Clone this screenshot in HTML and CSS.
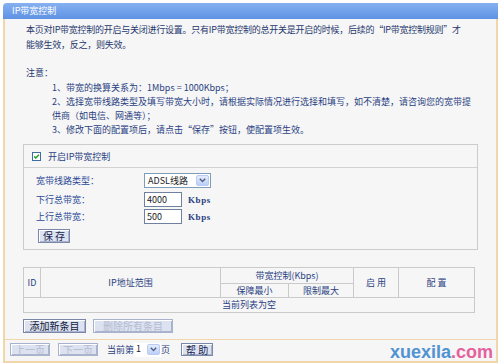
FILE: index.html
```html
<!DOCTYPE html>
<html lang="zh-CN">
<head>
<meta charset="utf-8">
<title>IP带宽控制</title>
<link rel="stylesheet" href="styles.css">
</head>
<body>
<div class="window">
  <div class="title">IP带宽控制</div>
  <div class="panel">
    <div class="content">
      <p class="intro">本页对IP带宽控制的开启与关闭进行设置。只有IP带宽控制的总开关是开启的时候，后续的“IP带宽控制规则”才<br>能够生效，反之，则失效。</p>
      <p class="note-title">注意：</p>
      <div class="notes">
        <p>1、带宽的换算关系为：1Mbps = 1000Kbps；</p>
        <p>2、选择宽带线路类型及填写带宽大小时，请根据实际情况进行选择和填写，如不清楚，请咨询您的宽带提<br>供商（如电信、网通等）；</p>
        <p>3、修改下面的配置项后，请点击“保存”按钮，使配置项生效。</p>
      </div>
      <div class="box">
        <div class="enable">
          <span class="check"><svg width="9" height="9" viewBox="0 0 9 9"><rect x="0.5" y="0.5" width="8" height="8" fill="#fff" stroke="#3a6ea5"/><path d="M2.2 4.4 L3.8 6 L6.9 2.7" fill="none" stroke="#21a121" stroke-width="1.5"/></svg></span>
          <span>开启IP带宽控制</span>
        </div>
        <div class="form">
          <div class="row r1">
            <span class="label">宽带线路类型：</span>
            <span class="select">ADSL线路<span class="arrow"><svg width="7" height="5" viewBox="0 0 7 5"><path d="M0.8 0.8 L3.5 3.6 L6.2 0.8" fill="none" stroke="#4d6185" stroke-width="1.4"/></svg></span></span>
          </div>
          <div class="row r2">
            <span class="label">下行总带宽：</span>
            <span class="field">4000</span><span class="unit">Kbps</span>
          </div>
          <div class="row r3">
            <span class="label">上行总带宽：</span>
            <span class="field">500</span><span class="unit">Kbps</span>
          </div>
          <div class="row r4">
            <button class="btn save">保 存</button>
          </div>
        </div>
      </div>
      <table class="rules">
        <colgroup>
          <col class="c-id"><col class="c-ip"><col class="c-min"><col class="c-max"><col class="c-en"><col class="c-cfg">
        </colgroup>
        <tr class="h1">
          <th rowspan="2">ID</th>
          <th rowspan="2">IP地址范围</th>
          <th colspan="2">带宽控制(Kbps)</th>
          <th rowspan="2">启 用</th>
          <th rowspan="2">配 置</th>
        </tr>
        <tr class="h2">
          <th>保障最小</th>
          <th>限制最大</th>
        </tr>
        <tr class="empty">
          <td colspan="6">当前列表为空</td>
        </tr>
      </table>
      <div class="actions">
        <button class="btn add">添加新条目</button>
        <button class="btn del" disabled>删除所有条目</button>
      </div>
    </div>
    <div class="footer">
      <button class="btn pager" disabled>上一页</button>
      <button class="btn pager" disabled>下一页</button>
      <span class="cur">当前第</span>
      <span class="page-select">1<span class="arrow"><svg width="7" height="5" viewBox="0 0 7 5"><path d="M0.8 0.8 L3.5 3.6 L6.2 0.8" fill="none" stroke="#4d6185" stroke-width="1.4"/></svg></span></span>
      <span class="pg">页</span>
      <button class="btn help">帮 助</button>
    </div>
  </div>
</div>
<div class="watermark">xuexila<span class="dot">.com</span></div>
</body>
</html>
```

FILE: styles.css
```css
* {
  box-sizing: border-box;
  margin: 0;
  padding: 0;
}

html, body {
  background: #ffffff;
}

body {
  position: relative;
  width: 500px;
  height: 363px;
  overflow: hidden;
  font-family: "Noto Sans CJK SC", "DejaVu Sans", sans-serif;
  font-size: 9px;
  color: #2a3f82;
}

.window {
  margin: 3px 0 0 3px;
  width: 495px;
}

.title {
  height: 16px;
  line-height: 16px;
  padding-left: 9px;
  color: #ffffff;
  font-size: 9px;
  background: linear-gradient(#86b0f1, #5f92e4);
  border-radius: 4px 0 0 0;
}

.panel {
  height: 344px;
  background: #f6f6f6;
  border: 2px solid #f0d6a8;
  border-top: none;
  display: flex;
  flex-direction: column;
}

.content {
  padding: 3px 18px 6px 18px;
}

.intro {
  line-height: 15px;
  padding-left: 3px;
  color: #26386e;
  white-space: nowrap;
  letter-spacing: -0.25px;
}

.note-title {
  margin-top: 13px;
  line-height: 15px;
  padding-left: 3px;
  color: #26386e;
}

.notes {
  margin-top: 1px;
  padding-left: 29px;
  line-height: 14px;
  color: #2a3f82;
  white-space: nowrap;
}

.box {
  margin-top: 7px;
  border: 1px solid #cccccc;
  background: #f6f6f6;
}

.enable {
  height: 23px;
  display: flex;
  align-items: center;
  padding-left: 8px;
  border-bottom: 1px solid #d2d2d2;
}

.check {
  display: flex;
  width: 9px;
  height: 9px;
  margin-right: 7px;
}

.form {
  padding: 5px 0 6px 12px;
}

.row {
  display: flex;
  align-items: center;
  height: 15px;
}

.r2 { margin-top: 4px; }
.r3 { margin-top: 2px; }
.r4 { margin-top: 5px; height: 14px; }

.label {
  width: 108px;
  color: #2d4a96;
}

.select {
  position: relative;
  width: 67px;
  height: 15px;
  line-height: 13px;
  padding-left: 3px;
  background: #ffffff;
  border: 1px solid #7f9db9;
  color: #222222;
}

.select .arrow,
.page-select .arrow {
  position: absolute;
  right: 1px;
  top: 1px;
  width: 13px;
  height: 11px;
  border: 1px solid #b8cbf2;
  border-radius: 2px;
  background: linear-gradient(#e4ecfd, #bccff7);
  display: flex;
  align-items: center;
  justify-content: center;
}

.field {
  width: 38px;
  height: 15px;
  line-height: 13px;
  padding-left: 2px;
  background: #ffffff;
  border: 1px solid #6f819f;
  color: #222222;
}

.unit {
  margin-left: 6px;
  letter-spacing: 0.6px;
  color: #2a3f82;
  font-family: "Liberation Serif", "DejaVu Serif", serif;
  font-weight: bold;
}

.btn {
  height: 14px;
  font-family: "Noto Sans CJK SC", "DejaVu Sans", sans-serif;
  font-size: 10px;
  line-height: 12px;
  color: #1a2650;
  background: #dde2f0;
  border: 1px solid #7b87a9;
  box-shadow: inset 1px 1px 0 #ffffff, inset -1px -1px 0 #aab4cf;
  padding: 0;
  white-space: nowrap;
}

.btn:disabled {
  color: #b3bbd2;
  border-color: #a9b2cc;
}

.save {
  width: 32px;
  margin-left: 2px;
}

.rules {
  margin-top: 17px;
  width: 451px;
  border-collapse: collapse;
  table-layout: fixed;
  color: #2a3f82;
}

.rules th,
.rules td {
  border: 1px solid #cacaca;
  font-weight: normal;
  text-align: center;
  padding: 0;
  line-height: 12px;
}

.c-id { width: 17px; }
.c-ip { width: 180px; }
.c-min { width: 68px; }
.c-max { width: 65px; }
.c-en { width: 45px; }
.c-cfg { width: 76px; }

.h1 { height: 16px; }
.h2 { height: 14px; }
.empty { height: 15px; }

.actions {
  margin-top: 6px;
  display: flex;
  gap: 7px;
}

.add {
  width: 63px;
  color: #111a3a;
}

.del {
  width: 80px;
}

.footer {
  flex: 1;
  border-top: 1px solid #f0d6a8;
  display: flex;
  align-items: center;
  padding: 0 0 2px 5px;
  white-space: nowrap;
}

.pager {
  width: 40px;
  height: 13px;
  margin-right: 8px;
}

.cur {
  margin-left: 1px;
  margin-right: 0;
  color: #2a3f82;
}

.page-select {
  position: relative;
  width: 27px;
  height: 14px;
  line-height: 12px;
  padding-left: 2px;
  background: #ffffff;
  color: #222222;
}

.help {
  width: 32px;
  height: 13px;
  margin-left: 11px;
}

.watermark {
  position: absolute;
  left: 390px;
  top: 343px;
  font-family: "Liberation Sans", Arial, sans-serif;
  font-size: 18px;
  line-height: 18px;
  font-weight: bold;
  color: #4f93d2;
}

.watermark .dot {
  color: #e6609c;
}
```
